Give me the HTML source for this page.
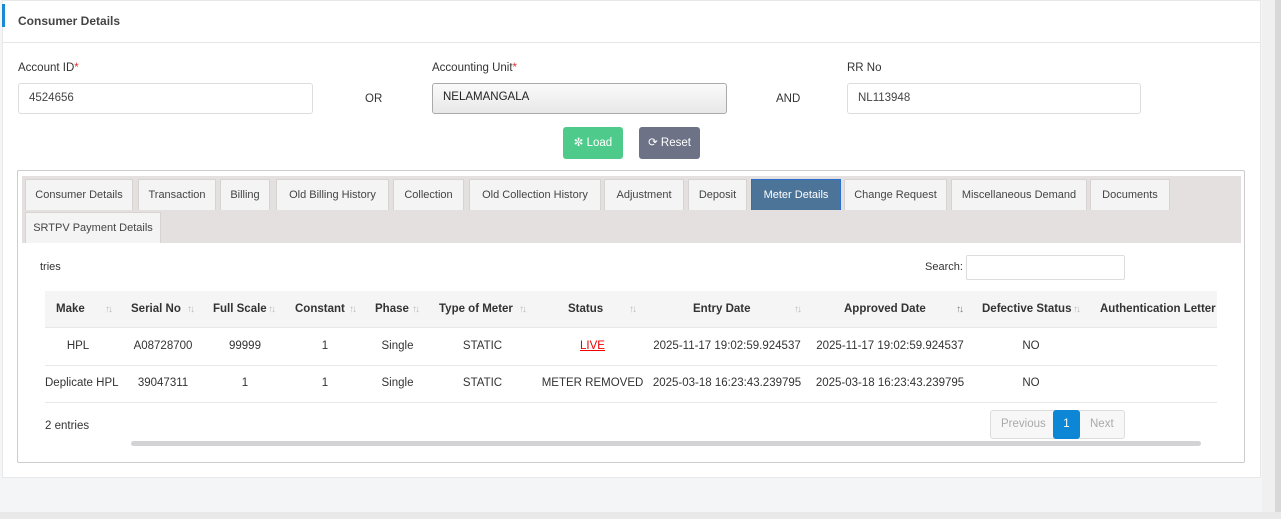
<!DOCTYPE html>
<html><head><meta charset="utf-8"><style>
*{box-sizing:border-box;margin:0;padding:0}
body{width:1281px;height:519px;background:#f4f5f7;font-family:"Liberation Sans",sans-serif;font-size:11.5px;color:#333;position:relative;overflow:hidden}
.a{position:absolute;white-space:nowrap}
.card{position:absolute;left:2px;top:0;width:1259px;height:478px;background:#fff;border:1px solid #e8e8e8}
.inp{position:absolute;height:31px;border:1px solid #ddd;border-radius:3px;background:#fff;padding:8px 10px;font-size:11.5px;color:#444}
.tab{position:absolute;height:31px;background:#f4f4f4;border:1px solid #d6d3d2;border-bottom:none;font-size:11px;color:#444;text-align:center;line-height:30px}
.th{position:absolute;top:291px;height:37px;line-height:37px;font-weight:bold;font-size:11.5px;color:#333;white-space:nowrap}
.td{position:absolute;text-align:center;white-space:nowrap;font-size:11.5px;color:#333}
.s{position:absolute;top:304px;color:#bbb;font-size:10px;letter-spacing:-2px}
</style></head><body>
<div class="card"></div>
<div class="a" style="left:2px;top:4px;width:3px;height:23px;background:#1a8ad4"></div>
<div class="a" style="left:18px;top:14px;font-size:12px;font-weight:bold;color:#444">Consumer Details</div>
<div class="a" style="left:3px;top:42px;width:1257px;height:1px;background:#e6e6e6"></div>

<div class="a" style="left:18px;top:62px">Account ID<span style="color:#d33">*</span></div>
<div class="inp" style="left:18px;top:83px;width:295px">4524656</div>
<div class="a" style="left:365px;top:93px">OR</div>
<div class="a" style="left:432px;top:62px">Accounting Unit<span style="color:#d33">*</span></div>
<div class="inp" style="left:432px;top:83px;width:295px;background:linear-gradient(#fafafa,#e8e8e8);border-color:#aaa;padding-top:7px;color:#222">NELAMANGALA</div>
<div class="a" style="left:776px;top:93px">AND</div>
<div class="a" style="left:847px;top:62px">RR No</div>
<div class="inp" style="left:847px;top:83px;width:294px">NL113948</div>

<div class="a" style="left:563px;top:127px;width:60px;height:32px;background:#4ecb8a;border-radius:3px;color:#fff;line-height:32px;text-align:center">&#10044; Load</div>
<div class="a" style="left:639px;top:127px;width:61px;height:32px;background:#6d7286;border-radius:3px;color:#fff;line-height:32px;text-align:center">&#10227; Reset</div>

<div class="a" style="left:17px;top:170px;width:1228px;height:293px;border:1px solid #ccc;border-radius:2px"></div>
<div class="a" style="left:22px;top:176px;width:1219px;height:67px;background:#e3e0df"></div>
<div class="tab" style="left:25px;top:179px;width:108px">Consumer Details</div>
<div class="tab" style="left:138px;top:179px;width:78px">Transaction</div>
<div class="tab" style="left:220px;top:179px;width:50px">Billing</div>
<div class="tab" style="left:276px;top:179px;width:113px">Old Billing History</div>
<div class="tab" style="left:393px;top:179px;width:71px">Collection</div>
<div class="tab" style="left:469px;top:179px;width:132px">Old Collection History</div>
<div class="tab" style="left:604px;top:179px;width:80px">Adjustment</div>
<div class="tab" style="left:688px;top:179px;width:59px">Deposit</div>
<div class="tab" style="left:751px;top:179px;width:90px;background:#4c7398;color:#fff;border-color:#2a6fd0">Meter Details</div>
<div class="tab" style="left:844px;top:179px;width:103px">Change Request</div>
<div class="tab" style="left:951px;top:179px;width:136px">Miscellaneous Demand</div>
<div class="tab" style="left:1090px;top:179px;width:80px">Documents</div>
<div class="tab" style="left:25px;top:212px;width:136px">SRTPV Payment Details</div>

<div class="a" style="left:40px;top:261px;font-size:11px">tries</div>
<div class="a" style="left:925px;top:261px;font-size:11px">Search:</div>
<div class="a" style="left:966px;top:255px;width:159px;height:25px;border:1px solid #ddd;border-radius:2px"></div>

<div class="a" style="left:45px;top:291px;width:1172px;height:37px;background:#f5f5f5;border-bottom:1px solid #e8e8e8"></div>
<div class="a" style="left:45px;top:365px;width:1172px;height:1px;background:#e8e8e8"></div>
<div class="a" style="left:45px;top:402px;width:1172px;height:1px;background:#e8e8e8"></div>

<div class="th" style="left:56px">Make</div><div class="s" style="left:105px">↑↓</div>
<div class="th" style="left:131px">Serial No</div><div class="s" style="left:187px">↑↓</div>
<div class="th" style="left:213px">Full Scale</div><div class="s" style="left:268px">↑↓</div>
<div class="th" style="left:295px">Constant</div><div class="s" style="left:349px">↑↓</div>
<div class="th" style="left:375px">Phase</div><div class="s" style="left:412px">↑↓</div>
<div class="th" style="left:439px">Type of Meter</div><div class="s" style="left:519px">↑↓</div>
<div class="th" style="left:568px">Status</div><div class="s" style="left:629px">↑↓</div>
<div class="th" style="left:693px">Entry Date</div><div class="s" style="left:794px">↑↓</div>
<div class="th" style="left:844px">Approved Date</div><div class="s" style="left:956px;color:#777">↑↓</div>
<div class="th" style="left:982px">Defective Status</div><div class="s" style="left:1073px">↑↓</div>
<div class="th" style="left:1100px;width:117px;overflow:hidden">Authentication Letter</div>

<div class="td" style="left:48px;width:60px;top:340px">HPL</div>
<div class="td" style="left:122px;width:82px;top:340px">A08728700</div>
<div class="td" style="left:205px;width:80px;top:340px">99999</div>
<div class="td" style="left:285px;width:80px;top:340px">1</div>
<div class="td" style="left:365px;width:65px;top:340px">Single</div>
<div class="td" style="left:440px;width:85px;top:340px">STATIC</div>
<div class="td" style="left:545px;width:95px;top:340px;color:#e00;text-decoration:underline">LIVE</div>
<div class="td" style="left:652px;width:150px;top:340px">2025-11-17 19:02:59.924537</div>
<div class="td" style="left:815px;width:150px;top:340px">2025-11-17 19:02:59.924537</div>
<div class="td" style="left:1000px;width:62px;top:340px">NO</div>

<div class="td" style="left:45px;top:377px;text-align:left">Deplicate HPL</div>
<div class="td" style="left:122px;width:82px;top:377px">39047311</div>
<div class="td" style="left:205px;width:80px;top:377px">1</div>
<div class="td" style="left:285px;width:80px;top:377px">1</div>
<div class="td" style="left:365px;width:65px;top:377px">Single</div>
<div class="td" style="left:440px;width:85px;top:377px">STATIC</div>
<div class="td" style="left:540px;width:105px;top:377px">METER REMOVED</div>
<div class="td" style="left:652px;width:150px;top:377px">2025-03-18 16:23:43.239795</div>
<div class="td" style="left:815px;width:150px;top:377px">2025-03-18 16:23:43.239795</div>
<div class="td" style="left:1000px;width:62px;top:377px">NO</div>

<div class="a" style="left:45px;top:420px">2 entries</div>
<div class="a" style="left:990px;top:410px;width:135px;height:29px;border:1px solid #ddd;border-radius:3px;background:#f7f7f7"></div>
<div class="a" style="left:1001px;top:418px;color:#aaa">Previous</div>
<div class="a" style="left:1053px;top:410px;width:27px;height:29px;background:#0d86d6;border-radius:3px;color:#fff;text-align:center;line-height:29px">1</div>
<div class="a" style="left:1090px;top:418px;color:#aaa">Next</div>
<div class="a" style="left:131px;top:441px;width:1070px;height:5px;background:#d3d3d5;border-radius:3px"></div>

<div class="a" style="left:1262px;top:0;width:13px;height:519px;background:#f0f0f0"></div>
<div class="a" style="left:1275px;top:0;width:6px;height:519px;background:#d8d8d8"></div>
<div class="a" style="left:0;top:512px;width:1281px;height:7px;background:#e9e9ea"></div>
</body></html>
